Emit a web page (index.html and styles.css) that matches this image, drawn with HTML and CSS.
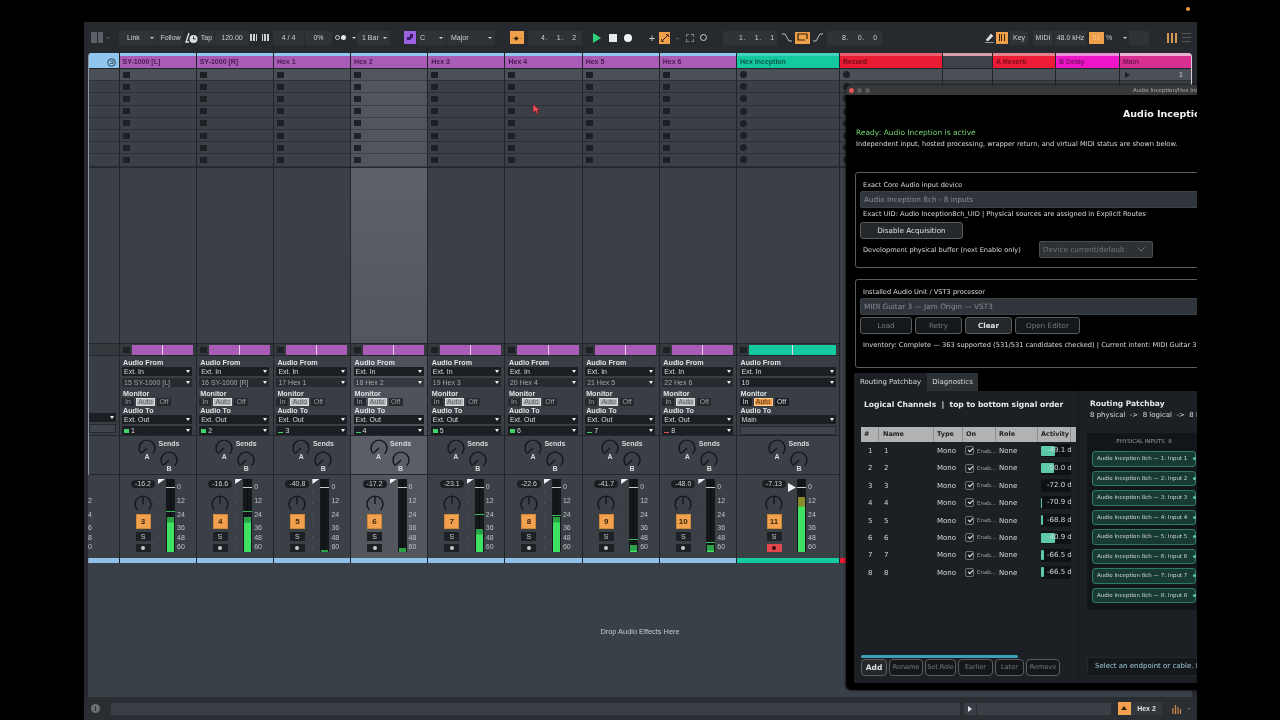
FILE: index.html
```html
<!DOCTYPE html>
<html lang="en">
<head>
  <meta charset="UTF-8">
  <title>Live Session - Audio Inception</title>
  <link rel="stylesheet" href="styles.css">
</head>
<body>
  <svg class="defs" width="0" height="0">
    <symbol id="send" viewBox="0 0 18 18"><path d="M3.3 14.7A8 8 0 1 1 14.7 14.7M9 9L3.9 14.1" fill="none" stroke="#14171a" stroke-width="1.4"/></symbol>
    <symbol id="pan" viewBox="0 0 18 18"><path d="M3.3 14.7A8 8 0 1 1 14.7 14.7M9 9V1" fill="none" stroke="#14171a" stroke-width="1.4"/></symbol>
  </svg>
  <div class="menubar"><i class="rec-dot"></i></div>

  <div class="app">
    <div class="transport">
      <div class="t-grip"><i></i><i></i></div>
      <i class="caret t-caret1"></i>
      <div class="box t-link">Link<i class="caret"></i></div>
      <div class="box t-follow">Follow</div>
      <svg class="t-clock" width="13" height="12" viewBox="0 0 13 12"><path d="M4 1L1 10H4" fill="none" stroke="#ddd" stroke-width="1.4"/><circle cx="8.5" cy="7" r="4" fill="#ddd"/><path d="M8.5 4.5V7H10.5" fill="none" stroke="#24272b"/></svg>
      <div class="box t-tap">Tap</div>
      <div class="box t-tempo">120.00</div>
      <div class="t-bars"><i></i><i></i><i class="thin"></i></div>
      <div class="t-bars t-bars2"><i class="thin"></i><i></i><i></i></div>
      <div class="box t-sig">4 / 4</div>
      <div class="box t-pct">0%</div>
      <div class="t-dots"><i class="open"></i><i></i></div>
      <i class="caret t-caret2"></i>
      <div class="box t-bar">1 Bar<i class="caret"></i></div>
      <div class="t-scale"><i></i></div>
      <div class="box t-key">C<i class="caret"></i></div>
      <div class="box t-major">Major<i class="caret"></i></div>
      <div class="obtn t-auto"><span>-&#9670;-</span></div>
      <div class="box t-pos">4. &nbsp;&nbsp;1. &nbsp;&nbsp;2</div>
      <i class="t-play"></i>
      <i class="t-stop"></i>
      <i class="t-rec"></i>
      <span class="t-plus">+</span>
      <div class="obtn t-link2">
        <svg width="8" height="8" viewBox="0 0 8 8"><path d="M1 7L7 1M1 5A1.5 1.5 0 1 0 3 7M5 1A1.5 1.5 0 1 1 7 3" fill="none" stroke="#3a2408"/></svg>
      </div>
      <span class="t-back">&#8592;</span>
      <i class="t-frame"></i>
      <i class="t-ring"></i>
      <div class="box t-start">1. &nbsp;&nbsp;1. &nbsp;&nbsp;1</div>
      <svg class="t-curve1" width="10" height="9" viewBox="0 0 10 9"><path d="M0 1H3L7 8H10" fill="none" stroke="#bbb"/></svg>
      <div class="obtn t-loop"><svg width="11" height="9" viewBox="0 0 11 9"><path d="M8 7H1V1H10V6" fill="none" stroke="#3a2408" stroke-width="1.2"/></svg></div>
      <svg class="t-curve2" width="10" height="9" viewBox="0 0 10 9"><path d="M0 8H3L7 1H10" fill="none" stroke="#bbb"/></svg>
      <div class="box t-len">8. &nbsp;&nbsp;0. &nbsp;&nbsp;0</div>
      <svg class="t-pencil" width="9" height="10" viewBox="0 0 9 10"><path d="M1 7L6 1L8 3L3 8ZM0 9.5H9" fill="#ddd" stroke="#ddd" stroke-width=".6"/></svg>
      <div class="obtn t-piano"><span></span></div>
      <div class="box t-keyb">Key</div>
      <div class="box t-midi">MIDI</div>
      <div class="box t-rate">48.0 kHz</div>
      <div class="t-cpu"><b>51</b></div>
      <span class="t-percent">%</span>
      <i class="caret t-caret3"></i>
      <div class="box t-blank"></div>
      <div class="t-views"><i></i><i></i><i></i></div>
      <div class="t-lines"><i></i><i></i><i></i></div>
    </div>

    <div class="session">
      <div class="col head">
        <div class="title"><svg width="9" height="9" viewBox="0 0 9 9"><circle cx="4.5" cy="4.5" r="3.8" fill="none" stroke="#27424f"/><path d="M3 3H6V5.5H3" fill="none" stroke="#27424f" stroke-width=".8"/></svg></div>
        <div class="slot"></div><div class="slot"></div><div class="slot"></div><div class="slot"></div>
        <div class="slot"></div><div class="slot"></div><div class="slot"></div><div class="slot"></div>
        <div class="empty"></div>
        <div class="ovw"></div>
        <div class="dev">
          <div class="dd head-dd">&nbsp;</div>
          <div class="dd-box"></div>
        </div>
        <div class="sends"></div>
        <div class="mix">
          <div class="scale"><span>0</span><span>12</span><span>24</span><span>36</span><span>48</span><span>60</span></div>
        </div>
        <div class="foot"></div>
      </div>

      <div class="col">
        <div class="title">SY-1000 [L]</div>
        <div class="slot"><i class="stop"></i></div><div class="slot"><i class="stop"></i></div><div class="slot"><i class="stop"></i></div><div class="slot"><i class="stop"></i></div>
        <div class="slot"><i class="stop"></i></div><div class="slot"><i class="stop"></i></div><div class="slot"><i class="stop"></i></div><div class="slot"><i class="stop"></i></div>
        <div class="empty"></div>
        <div class="ovw"><i class="stop"></i><div class="clip"><i></i></div></div>
        <div class="dev">
          <label>Audio From</label>
          <div class="dd">Ext. In</div>
          <div class="dd sub">15 SY-1000 [L]</div>
          <label>Monitor</label>
          <div class="mon"><span>In</span><span class="on">Auto</span><span>Off</span></div>
          <label>Audio To</label>
          <div class="dd">Ext. Out</div>
          <div class="dd"><i class="sig high"></i>1</div>
        </div>
        <div class="sends">
          <div class="knob"><svg width="18" height="18"><use href="#send"/></svg><b>A</b></div>
          <div class="knob"><span>Sends</span><svg width="18" height="18"><use href="#send"/></svg><b>B</b></div>
        </div>
        <div class="mix">
          <div class="mix-l">
            <div class="pill">-16.2</div>
            <svg class="pan" width="18" height="18"><use href="#pan"/></svg>
            <div class="num">3</div>
            <div class="solo">S</div>
            <div class="arm"><i></i></div>
          </div>
          <i class="flag"></i>
          <i class="ticks"></i>
          <div class="meter"><i class="peak" style="top:32px"></i><i class="fill" style="height:35px"></i></div>
          <div class="scale"><span>0</span><span>12</span><span>24</span><span>36</span><span>48</span><span>60</span></div>
        </div>
        <div class="foot"></div>
      </div>

      <div class="col">
        <div class="title">SY-1000 [R]</div>
        <div class="slot"><i class="stop"></i></div><div class="slot"><i class="stop"></i></div><div class="slot"><i class="stop"></i></div><div class="slot"><i class="stop"></i></div>
        <div class="slot"><i class="stop"></i></div><div class="slot"><i class="stop"></i></div><div class="slot"><i class="stop"></i></div><div class="slot"><i class="stop"></i></div>
        <div class="empty"></div>
        <div class="ovw"><i class="stop"></i><div class="clip"><i></i></div></div>
        <div class="dev">
          <label>Audio From</label>
          <div class="dd">Ext. In</div>
          <div class="dd sub">16 SY-1000 [R]</div>
          <label>Monitor</label>
          <div class="mon"><span>In</span><span class="on">Auto</span><span>Off</span></div>
          <label>Audio To</label>
          <div class="dd">Ext. Out</div>
          <div class="dd"><i class="sig high"></i>2</div>
        </div>
        <div class="sends">
          <div class="knob"><svg width="18" height="18"><use href="#send"/></svg><b>A</b></div>
          <div class="knob"><span>Sends</span><svg width="18" height="18"><use href="#send"/></svg><b>B</b></div>
        </div>
        <div class="mix">
          <div class="mix-l">
            <div class="pill">-16.6</div>
            <svg class="pan" width="18" height="18"><use href="#pan"/></svg>
            <div class="num">4</div>
            <div class="solo">S</div>
            <div class="arm"><i></i></div>
          </div>
          <i class="flag"></i>
          <i class="ticks"></i>
          <div class="meter"><i class="peak" style="top:32px"></i><i class="fill" style="height:35px"></i></div>
          <div class="scale"><span>0</span><span>12</span><span>24</span><span>36</span><span>48</span><span>60</span></div>
        </div>
        <div class="foot"></div>
      </div>

      <div class="col">
        <div class="title">Hex 1</div>
        <div class="slot"><i class="stop"></i></div><div class="slot"><i class="stop"></i></div><div class="slot"><i class="stop"></i></div><div class="slot"><i class="stop"></i></div>
        <div class="slot"><i class="stop"></i></div><div class="slot"><i class="stop"></i></div><div class="slot"><i class="stop"></i></div><div class="slot"><i class="stop"></i></div>
        <div class="empty"></div>
        <div class="ovw"><i class="stop"></i><div class="clip"><i></i></div></div>
        <div class="dev">
          <label>Audio From</label>
          <div class="dd">Ext. In</div>
          <div class="dd sub">17 Hex 1</div>
          <label>Monitor</label>
          <div class="mon"><span>In</span><span class="on">Auto</span><span>Off</span></div>
          <label>Audio To</label>
          <div class="dd">Ext. Out</div>
          <div class="dd"><i class="sig"></i>3</div>
        </div>
        <div class="sends">
          <div class="knob"><svg width="18" height="18"><use href="#send"/></svg><b>A</b></div>
          <div class="knob"><span>Sends</span><svg width="18" height="18"><use href="#send"/></svg><b>B</b></div>
        </div>
        <div class="mix">
          <div class="mix-l">
            <div class="pill">-40.8</div>
            <svg class="pan" width="18" height="18"><use href="#pan"/></svg>
            <div class="num">5</div>
            <div class="solo">S</div>
            <div class="arm"><i></i></div>
          </div>
          <i class="flag"></i>
          <i class="ticks"></i>
          <div class="meter"><i class="fill" style="height:2px"></i></div>
          <div class="scale"><span>0</span><span>12</span><span>24</span><span>36</span><span>48</span><span>60</span></div>
        </div>
        <div class="foot"></div>
      </div>

      <div class="col selected">
        <div class="title">Hex 2</div>
        <div class="slot"><i class="stop"></i></div><div class="slot"><i class="stop"></i></div><div class="slot"><i class="stop"></i></div><div class="slot"><i class="stop"></i></div>
        <div class="slot"><i class="stop"></i></div><div class="slot"><i class="stop"></i></div><div class="slot"><i class="stop"></i></div><div class="slot"><i class="stop"></i></div>
        <div class="empty"></div>
        <div class="ovw"><i class="stop"></i><div class="clip"><i></i></div></div>
        <div class="dev">
          <label>Audio From</label>
          <div class="dd">Ext. In</div>
          <div class="dd sub">18 Hex 2</div>
          <label>Monitor</label>
          <div class="mon"><span>In</span><span class="on">Auto</span><span>Off</span></div>
          <label>Audio To</label>
          <div class="dd">Ext. Out</div>
          <div class="dd"><i class="sig"></i>4</div>
        </div>
        <div class="sends">
          <div class="knob"><svg width="18" height="18"><use href="#send"/></svg><b>A</b></div>
          <div class="knob"><span>Sends</span><svg width="18" height="18"><use href="#send"/></svg><b>B</b></div>
        </div>
        <div class="mix">
          <div class="mix-l">
            <div class="pill">-17.2</div>
            <svg class="pan" width="18" height="18"><use href="#pan"/></svg>
            <div class="num">6</div>
            <div class="solo">S</div>
            <div class="arm"><i></i></div>
          </div>
          <i class="flag"></i>
          <i class="ticks"></i>
          <div class="meter"><i class="fill" style="height:4px"></i></div>
          <div class="scale"><span>0</span><span>12</span><span>24</span><span>36</span><span>48</span><span>60</span></div>
        </div>
        <div class="foot"></div>
      </div>

      <div class="col">
        <div class="title">Hex 3</div>
        <div class="slot"><i class="stop"></i></div><div class="slot"><i class="stop"></i></div><div class="slot"><i class="stop"></i></div><div class="slot"><i class="stop"></i></div>
        <div class="slot"><i class="stop"></i></div><div class="slot"><i class="stop"></i></div><div class="slot"><i class="stop"></i></div><div class="slot"><i class="stop"></i></div>
        <div class="empty"></div>
        <div class="ovw"><i class="stop"></i><div class="clip"><i></i></div></div>
        <div class="dev">
          <label>Audio From</label>
          <div class="dd">Ext. In</div>
          <div class="dd sub">19 Hex 3</div>
          <label>Monitor</label>
          <div class="mon"><span>In</span><span class="on">Auto</span><span>Off</span></div>
          <label>Audio To</label>
          <div class="dd">Ext. Out</div>
          <div class="dd"><i class="sig high"></i>5</div>
        </div>
        <div class="sends">
          <div class="knob"><svg width="18" height="18"><use href="#send"/></svg><b>A</b></div>
          <div class="knob"><span>Sends</span><svg width="18" height="18"><use href="#send"/></svg><b>B</b></div>
        </div>
        <div class="mix">
          <div class="mix-l">
            <div class="pill">-23.1</div>
            <svg class="pan" width="18" height="18"><use href="#pan"/></svg>
            <div class="num">7</div>
            <div class="solo">S</div>
            <div class="arm"><i></i></div>
          </div>
          <i class="flag"></i>
          <i class="ticks"></i>
          <div class="meter"><i class="peak" style="top:35px"></i><i class="fill" style="height:23px"></i></div>
          <div class="scale"><span>0</span><span>12</span><span>24</span><span>36</span><span>48</span><span>60</span></div>
        </div>
        <div class="foot"></div>
      </div>

      <div class="col">
        <div class="title">Hex 4</div>
        <div class="slot"><i class="stop"></i></div><div class="slot"><i class="stop"></i></div><div class="slot"><i class="stop"></i></div><div class="slot"><i class="stop"></i></div>
        <div class="slot"><i class="stop"></i></div><div class="slot"><i class="stop"></i></div><div class="slot"><i class="stop"></i></div><div class="slot"><i class="stop"></i></div>
        <div class="empty"></div>
        <div class="ovw"><i class="stop"></i><div class="clip"><i></i></div></div>
        <div class="dev">
          <label>Audio From</label>
          <div class="dd">Ext. In</div>
          <div class="dd sub">20 Hex 4</div>
          <label>Monitor</label>
          <div class="mon"><span>In</span><span class="on">Auto</span><span>Off</span></div>
          <label>Audio To</label>
          <div class="dd">Ext. Out</div>
          <div class="dd"><i class="sig high"></i>6</div>
        </div>
        <div class="sends">
          <div class="knob"><svg width="18" height="18"><use href="#send"/></svg><b>A</b></div>
          <div class="knob"><span>Sends</span><svg width="18" height="18"><use href="#send"/></svg><b>B</b></div>
        </div>
        <div class="mix">
          <div class="mix-l">
            <div class="pill">-22.6</div>
            <svg class="pan" width="18" height="18"><use href="#pan"/></svg>
            <div class="num">8</div>
            <div class="solo">S</div>
            <div class="arm"><i></i></div>
          </div>
          <i class="flag"></i>
          <i class="ticks"></i>
          <div class="meter"><i class="peak" style="top:36px"></i><i class="fill" style="height:35px"></i></div>
          <div class="scale"><span>0</span><span>12</span><span>24</span><span>36</span><span>48</span><span>60</span></div>
        </div>
        <div class="foot"></div>
      </div>

      <div class="col">
        <div class="title">Hex 5</div>
        <div class="slot"><i class="stop"></i></div><div class="slot"><i class="stop"></i></div><div class="slot"><i class="stop"></i></div><div class="slot"><i class="stop"></i></div>
        <div class="slot"><i class="stop"></i></div><div class="slot"><i class="stop"></i></div><div class="slot"><i class="stop"></i></div><div class="slot"><i class="stop"></i></div>
        <div class="empty"></div>
        <div class="ovw"><i class="stop"></i><div class="clip"><i></i></div></div>
        <div class="dev">
          <label>Audio From</label>
          <div class="dd">Ext. In</div>
          <div class="dd sub">21 Hex 5</div>
          <label>Monitor</label>
          <div class="mon"><span>In</span><span class="on">Auto</span><span>Off</span></div>
          <label>Audio To</label>
          <div class="dd">Ext. Out</div>
          <div class="dd"><i class="sig"></i>7</div>
        </div>
        <div class="sends">
          <div class="knob"><svg width="18" height="18"><use href="#send"/></svg><b>A</b></div>
          <div class="knob"><span>Sends</span><svg width="18" height="18"><use href="#send"/></svg><b>B</b></div>
        </div>
        <div class="mix">
          <div class="mix-l">
            <div class="pill">-41.7</div>
            <svg class="pan" width="18" height="18"><use href="#pan"/></svg>
            <div class="num">9</div>
            <div class="solo">S</div>
            <div class="arm"><i></i></div>
          </div>
          <i class="flag"></i>
          <i class="ticks"></i>
          <div class="meter"><i class="peak" style="top:60px"></i><i class="fill" style="height:7px"></i></div>
          <div class="scale"><span>0</span><span>12</span><span>24</span><span>36</span><span>48</span><span>60</span></div>
        </div>
        <div class="foot"></div>
      </div>

      <div class="col">
        <div class="title">Hex 6</div>
        <div class="slot"><i class="stop"></i></div><div class="slot"><i class="stop"></i></div><div class="slot"><i class="stop"></i></div><div class="slot"><i class="stop"></i></div>
        <div class="slot"><i class="stop"></i></div><div class="slot"><i class="stop"></i></div><div class="slot"><i class="stop"></i></div><div class="slot"><i class="stop"></i></div>
        <div class="empty"></div>
        <div class="ovw"><i class="stop"></i><div class="clip"><i></i></div></div>
        <div class="dev">
          <label>Audio From</label>
          <div class="dd">Ext. In</div>
          <div class="dd sub">22 Hex 6</div>
          <label>Monitor</label>
          <div class="mon"><span>In</span><span class="on">Auto</span><span>Off</span></div>
          <label>Audio To</label>
          <div class="dd">Ext. Out</div>
          <div class="dd"><i class="sig red"></i>8</div>
        </div>
        <div class="sends">
          <div class="knob"><svg width="18" height="18"><use href="#send"/></svg><b>A</b></div>
          <div class="knob"><span>Sends</span><svg width="18" height="18"><use href="#send"/></svg><b>B</b></div>
        </div>
        <div class="mix">
          <div class="mix-l">
            <div class="pill">-48.0</div>
            <svg class="pan" width="18" height="18"><use href="#pan"/></svg>
            <div class="num">10</div>
            <div class="solo">S</div>
            <div class="arm"><i></i></div>
          </div>
          <i class="flag"></i>
          <i class="ticks"></i>
          <div class="meter"><i class="peak" style="top:63px"></i><i class="fill" style="height:7px"></i></div>
          <div class="scale"><span>0</span><span>12</span><span>24</span><span>36</span><span>48</span><span>60</span></div>
        </div>
        <div class="foot"></div>
      </div>

      <div class="col wide teal">
        <div class="title">Hex Inception</div>
        <div class="slot"><i class="rec"></i></div><div class="slot"><i class="rec"></i></div><div class="slot"><i class="rec"></i></div><div class="slot"><i class="rec"></i></div>
        <div class="slot"><i class="rec"></i></div><div class="slot"><i class="rec"></i></div><div class="slot"><i class="rec"></i></div><div class="slot"><i class="rec"></i></div>
        <div class="empty"></div>
        <div class="ovw"><i class="stop"></i><div class="clip"><i></i></div></div>
        <div class="dev">
          <label>Audio From</label>
          <div class="dd">Ext. In</div>
          <div class="dd">10</div>
          <label>Monitor</label>
          <div class="mon"><span>In</span><span class="armed">Auto</span><span>Off</span></div>
          <label>Audio To</label>
          <div class="dd">Main</div>
          <div class="dd-box"></div>
        </div>
        <div class="sends">
          <div class="knob"><svg width="18" height="18"><use href="#send"/></svg><b>A</b></div>
          <div class="knob"><span>Sends</span><svg width="18" height="18"><use href="#send"/></svg><b>B</b></div>
        </div>
        <div class="mix">
          <div class="mix-l">
            <div class="pill">-7.13</div>
            <svg class="pan" width="18" height="18"><use href="#pan"/></svg>
            <div class="num">11</div>
            <div class="solo">S</div>
            <div class="arm hot"><i></i></div>
          </div>
          <i class="flag big"></i>
          <div class="meter"><i class="fill loud" style="height:55px"></i></div>
          <div class="scale"><span>0</span><span>12</span><span>24</span><span>36</span><span>48</span><span>60</span></div>
        </div>
        <div class="foot"></div>
      </div>

      <div class="col record">
        <div class="title">Record</div>
        <div class="slot"><i class="rec"></i></div><div class="slot"><i class="rec"></i></div><div class="slot"><i class="rec"></i></div><div class="slot"><i class="rec"></i></div>
        <div class="slot"><i class="rec"></i></div><div class="slot"><i class="rec"></i></div><div class="slot"><i class="rec"></i></div><div class="slot"><i class="rec"></i></div>
        <div class="empty"></div>
        <div class="foot"></div>
      </div>
      <div class="col gap-col">
        <div class="title"></div>
        <div class="slot"></div><div class="slot"></div>
        <div class="empty"></div>
      </div>
      <div class="col reverb">
        <div class="title">A Reverb</div>
        <div class="slot"></div><div class="slot"></div>
        <div class="empty"></div>
      </div>
      <div class="col delay">
        <div class="title">B Delay</div>
        <div class="slot"></div><div class="slot"></div>
        <div class="empty"></div>
      </div>
      <div class="col main">
        <div class="title">Main</div>
        <div class="slot"><i class="tri"></i><span>1</span></div><div class="slot"></div>
        <div class="empty"></div>
      </div>
    </div>

    <div class="drop">
      <span>Drop Audio Effects Here</span>
    </div>

    <div class="status">
      <span class="info">i</span>
      <div class="status-field"></div>
      <div class="status-play"><i></i></div>
      <div class="status-field2"></div>
      <div class="status-arm"><i></i></div>
      <div class="status-name">Hex 2</div>
      <svg class="status-icon" width="12" height="10" viewBox="0 0 12 10"><path d="M1 4V10M3.5 1V10M6 3V10M8.5 5V10" stroke="#c98a4a" stroke-width="1.2"/></svg>
      <i class="caret status-caret"></i>
    </div>

    <div class="plugin">
      <div class="plugin-bar">
        <i class="light close"></i><i class="light"></i><i class="light"></i>
        <span>Audio Inception/Hex Inception</span>
      </div>
      <div class="plugin-body">
        <h1>Audio Inception</h1>
        <p class="ready">Ready: Audio Inception is active</p>
        <p class="note">Independent input, hosted processing, wrapper return, and virtual MIDI status are shown below.</p>

        <div class="group group-input">
          <div class="group-label">Exact Core Audio input device</div>
          <div class="field">Audio Inception 8ch - 8 inputs</div>
          <div class="hint">Exact UID: Audio Inception8ch_UID | Physical sources are assigned in Explicit Routes</div>
          <div class="btn btn-acq">Disable Acquisition</div>
          <div class="buffer-row">
            <span>Development physical buffer (next Enable only)</span>
            <div class="select">Device current/default<svg width="8" height="5" viewBox="0 0 8 5"><path d="M0.5 0.5L4 4L7.5 0.5" fill="none" stroke="#6c7276"/></svg></div>
          </div>
        </div>

        <div class="group group-proc">
          <div class="group-label">Installed Audio Unit / VST3 processor</div>
          <div class="field">MIDI Guitar 3 — Jam Origin — VST3</div>
          <div class="btn-row">
            <div class="btn dim btn-load">Load</div>
            <div class="btn dim btn-retry">Retry</div>
            <div class="btn btn-clear">Clear</div>
            <div class="btn dim btn-editor">Open Editor</div>
          </div>
          <div class="hint inventory">Inventory: Complete — 363 supported (531/531 candidates checked) | Current intent: MIDI Guitar 3</div>
        </div>

        <div class="tabs">
          <div class="tab active">Routing Patchbay</div>
          <div class="tab">Diagnostics</div>
        </div>

        <div class="tab-panel">
          <div class="channels">
            <h2>Logical Channels &nbsp;|&nbsp; top to bottom signal order</h2>
            <div class="lc-head"><span>#</span><span>Name</span><span>Type</span><span>On</span><span>Role</span><span>Activity</span></div>
            <div class="lc-row">
              <span>1</span><span>1</span><span>Mono</span><span class="on-cell"><i class="check"></i>Enab...</span><span>None</span>
              <span class="act"><i style="width:14px"></i><em>-49.1 dB</em></span>
            </div>
            <div class="lc-row">
              <span>2</span><span>2</span><span>Mono</span><span class="on-cell"><i class="check"></i>Enab...</span><span>None</span>
              <span class="act"><i style="width:13px"></i><em>-50.0 dB</em></span>
            </div>
            <div class="lc-row">
              <span>3</span><span>3</span><span>Mono</span><span class="on-cell"><i class="check"></i>Enab...</span><span>None</span>
              <span class="act"><em>-72.0 dB</em></span>
            </div>
            <div class="lc-row">
              <span>4</span><span>4</span><span>Mono</span><span class="on-cell"><i class="check"></i>Enab...</span><span>None</span>
              <span class="act"><i style="width:1px"></i><em>-70.9 dB</em></span>
            </div>
            <div class="lc-row">
              <span>5</span><span>5</span><span>Mono</span><span class="on-cell"><i class="check"></i>Enab...</span><span>None</span>
              <span class="act"><i style="width:2px"></i><em>-68.8 dB</em></span>
            </div>
            <div class="lc-row">
              <span>6</span><span>6</span><span>Mono</span><span class="on-cell"><i class="check"></i>Enab...</span><span>None</span>
              <span class="act"><i style="width:14px"></i><em>-40.9 dB</em></span>
            </div>
            <div class="lc-row">
              <span>7</span><span>7</span><span>Mono</span><span class="on-cell"><i class="check"></i>Enab...</span><span>None</span>
              <span class="act"><i style="width:3px"></i><em>-66.5 dB</em></span>
            </div>
            <div class="lc-row">
              <span>8</span><span>8</span><span>Mono</span><span class="on-cell"><i class="check"></i>Enab...</span><span>None</span>
              <span class="act"><i style="width:3px"></i><em>-66.5 dB</em></span>
            </div>
            <div class="lc-space"></div>
            <div class="scrollbar"></div>
            <div class="lc-actions">
              <div class="btn small add">Add</div>
              <div class="btn small dim b-rename">Rename</div>
              <div class="btn small dim b-role">Set Role</div>
              <div class="btn small dim b-earlier">Earlier</div>
              <div class="btn small dim b-later">Later</div>
              <div class="btn small dim b-remove">Remove</div>
            </div>
          </div>

          <div class="patchbay">
            <h2>Routing Patchbay</h2>
            <p>8 physical &nbsp;-&gt;&nbsp; 8 logical &nbsp;-&gt;&nbsp; 8 hosted</p>
            <div class="canvas">
              <div class="canvas-title">PHYSICAL INPUTS &nbsp;8</div>
              <div class="node">Audio Inception 8ch — 1: Input 1<i></i></div>
              <div class="node">Audio Inception 8ch — 2: Input 2<i></i></div>
              <div class="node">Audio Inception 8ch — 3: Input 3<i></i></div>
              <div class="node">Audio Inception 8ch — 4: Input 4<i></i></div>
              <div class="node">Audio Inception 8ch — 5: Input 5<i></i></div>
              <div class="node">Audio Inception 8ch — 6: Input 6<i></i></div>
              <div class="node">Audio Inception 8ch — 7: Input 7<i></i></div>
              <div class="node">Audio Inception 8ch — 8: Input 8<i></i></div>
            </div>
            <div class="selectbar">Select an endpoint or cable. Drag to connect.</div>
          </div>
        </div>
      </div>
    </div>

    <svg class="cursor" width="9" height="12" viewBox="0 0 9 12"><path d="M1 1V10L3.2 8L5 11.2L6.5 10.4L5 7.4H8Z" fill="#e9505a" stroke="#5a1a20" stroke-width=".7"/></svg>
  </div>
</body>
</html>
```

FILE: styles.css
```css
* {
  box-sizing: border-box;
}
html, body {
  margin: 0;
  width: 1280px;
  height: 720px;
  overflow: hidden;
  background: #000;
  font-family: "Liberation Sans", Arial, sans-serif;
}
i {
  display: block;
  font-style: normal;
}
.defs {
  position: absolute;
}
.menubar {
  height: 22px;
  display: flex;
  justify-content: flex-end;
  padding: 7px 90px 0 0;
}
.rec-dot {
  width: 4px;
  height: 4px;
  border-radius: 50%;
  background: #f09a3a;
}
.app {
  position: relative;
  margin-left: 84px;
  width: 1113px;
  height: 698px;
  background: #26292d;
  display: flex;
  flex-direction: column;
  overflow: hidden;
  filter: blur(0.3px);
}

/* transport */
.transport {
  height: 31px;
  display: flex;
  align-items: center;
  color: #cdd0d2;
  font-size: 7px;
}
.box {
  position: relative;
  height: 14px;
  line-height: 14px;
  background: #2f3338;
  text-align: center;
  flex: none;
}
.caret {
  width: 0;
  height: 0;
  border: 2px solid transparent;
  border-top: 2.5px solid #cdd0d2;
  border-bottom: 0;
  flex: none;
}
.box .caret {
  position: absolute;
  right: 3px;
  top: 6px;
}
.obtn {
  background: #f0a04b;
  color: #3a2408;
  display: flex;
  align-items: center;
  justify-content: center;
  flex: none;
}
.t-grip { display: flex; gap: 1px; margin-left: 7px; width: 12px; height: 11px; }
.t-grip i { flex: 1; background: #5b6066; }
.t-caret1 { margin-left: 3px; border-top-color: #565b60; }
.t-link { margin-left: 9px; width: 38px; text-align: left; padding-left: 8px; }
.t-follow { margin-left: 1px; width: 25px; }
.t-clock { margin-left: 2px; flex: none; }
.t-tap { width: 15px; margin-left: 1px; }
.t-tempo { width: 34px; margin-left: 1px; }
.t-bars { display: flex; gap: 1px; width: 9px; height: 7px; margin-left: 1px; flex: none; }
.t-bars i { width: 2px; background: #cdd0d2; }
.t-bars i.thin { width: 1px; }
.t-bars2 { margin-left: 3px; }
.t-sig { width: 31px; margin-left: 2px; }
.t-pct { width: 27px; margin-left: 1px; }
.t-dots { display: flex; gap: 1px; margin-left: 3px; width: 12px; flex: none; }
.t-dots i { width: 5px; height: 5px; border-radius: 50%; background: #e4e6e7; }
.t-dots i.open { background: none; border: 1px solid #cdd0d2; }
.t-caret2 { margin-left: 5px; }
.t-bar { width: 33px; margin-left: 1px; text-align: left; padding-left: 5px; }
.t-scale { width: 12px; height: 13px; margin-left: 14px; background: #9a62e0; padding: 3px; flex: none; }
.t-scale i { width: 6px; height: 6px; background: #3a1d66; clip-path: polygon(0 100%, 0 50%, 50% 50%, 50% 0, 100% 0, 100% 50%, 50% 100%); }
.t-key { width: 29px; margin-left: 1px; text-align: left; padding-left: 3px; }
.t-major { width: 48px; margin-left: 1px; text-align: left; padding-left: 4px; }
.t-auto { width: 14px; height: 13px; margin-left: 15px; font-size: 6px; }
.t-pos { width: 54px; margin-left: 4px; text-align: right; padding-right: 5px; letter-spacing: 0.8px; }
.t-play { width: 0; height: 0; border-left: 8px solid #2fd27a; border-top: 5px solid transparent; border-bottom: 5px solid transparent; margin-left: 11px; flex: none; }
.t-stop { width: 8px; height: 8px; background: #e6e8e9; margin-left: 8px; flex: none; }
.t-rec { width: 8px; height: 8px; border-radius: 50%; background: #f1f2f3; margin-left: 7px; flex: none; }
.t-plus { margin-left: 16px; width: 8px; font-size: 11px; text-align: center; flex: none; }
.t-link2 { width: 11px; height: 12px; margin-left: 3px; }
.t-back { margin-left: 5px; width: 6px; font-size: 7px; color: #8b9094; flex: none; }
.t-frame { width: 8px; height: 8px; margin-left: 5px; border: 1px dashed #7f8488; flex: none; }
.t-ring { width: 7px; height: 7px; margin-left: 6px; border-radius: 50%; border: 1px solid #cdd0d2; flex: none; }
.t-start { width: 54px; margin-left: 16px; text-align: right; padding-right: 2px; letter-spacing: 0.8px; }
.t-curve1 { margin-left: 5px; flex: none; }
.t-loop { width: 15px; height: 12px; margin-left: 3px; }
.t-curve2 { margin-left: 3px; flex: none; }
.t-len { width: 55px; margin-left: 4px; text-align: right; padding-right: 4px; letter-spacing: 0.8px; }
.t-pencil { margin-left: 103px; flex: none; }
.t-piano { width: 12px; height: 12px; margin-left: 2px; }
.t-piano span { width: 6px; height: 7px; background: repeating-linear-gradient(90deg, #3a2408 0 1px, transparent 1px 2.5px); }
.t-keyb { width: 18px; margin-left: 2px; }
.t-midi { width: 20px; margin-left: 5px; }
.t-rate { width: 31px; margin-left: 2px; }
.t-cpu { width: 15px; height: 12px; margin-left: 3px; background: #f0a04b; text-align: center; line-height: 12px; flex: none; }
.t-cpu b { color: #f7c183; font-weight: normal; }
.t-percent { width: 8px; margin-left: 1px; text-align: center; flex: none; }
.t-caret3 { margin-left: 10px; }
.t-blank { width: 20px; margin-left: 2px; }
.t-views { display: flex; gap: 2px; margin-left: 18px; width: 10px; height: 10px; flex: none; }
.t-views i { width: 2px; background: #d79a55; }
.t-lines { display: flex; flex-direction: column; justify-content: space-between; margin-left: 5px; width: 9px; height: 9px; flex: none; }
.t-lines i { height: 1px; background: #53585d; }

/* session view */
.session {
  margin-left: 4px;
  width: 1104px;
  height: 510px;
  display: flex;
  flex: none;
  overflow: hidden;
  border-radius: 4px 4px 0 0;
  background: #3a4046;
}
.col {
  --c: #a95cb5;
  --top: #90c5ee;
  --foot: #8fc0e8;
  --txt: #4a1a52;
  width: 77.2px;
  display: flex;
  flex-direction: column;
  flex: none;
  border-right: 1px solid #20252a;
}
.col.head { width: 31.5px; --c: #90c5ee; border-left: 1px solid #8a98a2; }
.col.wide { width: 103px; }
.col.teal { --c: #12c9a0; --top: #45d2c0; --foot: #12c9a0; --txt: #0b5a48; }
.col.record { width: 103px; --c: #e91c33; --top: #e8606e; --foot: #e91c33; --txt: #6d0d18; }
.col.gap-col { width: 50px; --c: #3d4349; --top: #d8a0a8; }
.col.reverb { width: 63px; --c: #ee1c36; --top: #e8808c; --txt: #7d1020; }
.col.delay { width: 64px; --c: #ee14c8; --top: #ea90d8; --txt: #7d1068; }
.col.main { width: 72px; --c: #d92f92; --top: #eab0d0; --txt: #701450; border-right: 1px solid #d8d0d4; }
.title {
  height: 16px;
  flex: none;
  background: var(--c);
  border-top: 3px solid var(--top);
  border-bottom: 1px solid #20252a;
  color: var(--txt);
  font-size: 7px;
  font-weight: bold;
  line-height: 12px;
  padding-left: 3px;
}
.head .title {
  display: flex;
  align-items: center;
  justify-content: flex-end;
  padding-right: 3px;
}
.slot {
  height: 12.2px;
  flex: none;
  background: #3a4046;
  border-bottom: 1px solid #2b3035;
  display: flex;
  align-items: center;
  padding-left: 3px;
}
.slot:nth-child(2) {
  background: #4b5056;
}
.stop {
  width: 7px;
  height: 6px;
  background: #1d2125;
  flex: none;
}
.rec {
  width: 7px;
  height: 7px;
  border-radius: 50%;
  background: #1d2125;
  flex: none;
}
.tri {
  width: 0;
  height: 0;
  border-left: 5px solid #1d2125;
  border-top: 3px solid transparent;
  border-bottom: 3px solid transparent;
  margin-left: 2px;
}
.main .slot span {
  margin-left: auto;
  padding-right: 8px;
  font-size: 7px;
  color: #d0d2d4;
}
.empty {
  flex: 1;
  border-top: 1px solid #23272b;
}
.ovw {
  height: 13px;
  flex: none;
  display: flex;
  align-items: center;
  gap: 2px;
  padding: 0 3px;
  border-top: 1px solid #23272b;
  border-bottom: 1px solid #23272b;
  background: #34393e;
}
.clip {
  flex: 1;
  height: 10px;
  background: var(--c);
  display: flex;
  justify-content: center;
}
.clip i {
  width: 1px;
  background: #e8d2ec;
}
.dev {
  height: 80px;
  flex: none;
  padding: 2px 3.5px 0 2.5px;
  background: #383e44;
  border-bottom: 1px solid #23272b;
}
.dev label {
  display: block;
  height: 9px;
  padding-left: 1px;
  font-size: 7.2px;
  line-height: 9px;
  font-weight: bold;
  color: #dfe1e3;
}
.dd {
  position: relative;
  height: 9px;
  margin-bottom: 2px;
  padding-left: 2px;
  background: #1b1f23;
  color: #d7d9db;
  font-size: 7px;
  line-height: 9px;
  display: flex;
  align-items: center;
}
.dd::after {
  content: "";
  position: absolute;
  right: 2px;
  top: 3px;
  border: 2.5px solid transparent;
  border-top: 3px solid #f1f1f1;
  border-bottom: 0;
}
.dd.sub {
  background: #282c30;
  color: #a2a5a8;
}
.head .dev {
  padding: 0;
}
.head-dd {
  margin-top: 57px;
  width: 27px;
}
.dd-box {
  height: 9px;
  border: 1px solid #252a2e;
  background: #3f454a;
}
.head .dd-box {
  width: 27px;
}
.sig {
  width: 5px;
  height: 4px;
  margin-right: 2px;
  border-bottom: 1px solid #3fd46a;
}
.sig.high {
  background: #3fd46a;
}
.sig.red {
  border-bottom-color: #e05050;
}
.mon {
  display: flex;
  gap: 2px;
  height: 8px;
}
.mon span {
  width: 12px;
  background: #262a2e;
  color: #9a9da0;
  font-size: 7px;
  line-height: 8px;
  text-align: center;
}
.mon span.on {
  width: 19px;
  background: #b4b6b8;
  color: #5a5d60;
  outline: 1px solid #dadcdd;
  outline-offset: -1px;
}
.mon span:last-child {
  width: 14px;
}
.wide .mon span {
  color: #d8dadc;
  background: #1b1f23;
}
.wide .mon span.armed {
  width: 19px;
  background: #ee9b49;
  color: #4a2a08;
  outline: 1px solid #ffcc90;
  outline-offset: -1px;
}
.sends {
  height: 39px;
  flex: none;
  display: flex;
  padding: 3px 0 0 18.5px;
  gap: 4px;
  border-bottom: 1px solid #23272b;
  background: #3a4046;
}
.wide .sends {
  padding-left: 31px;
}
.knob {
  width: 18px;
  display: flex;
  flex-direction: column;
  align-items: center;
  color: #d6d8da;
  font-size: 7px;
  line-height: 9px;
}
.knob b {
  margin-top: -5px;
  font-weight: bold;
  font-size: 7px;
}
.knob span {
  font-weight: bold;
  height: 8px;
  margin-top: 1px;
  line-height: 8px;
}
.knob svg {
  flex: none;
}
.knob span + svg {
  margin-top: 3px;
}
.mix {
  height: 83px;
  flex: none;
  display: flex;
  padding: 4px 0 0 11.5px;
  background: #3a4046;
}
.wide .mix {
  padding-left: 25px;
}
.head .mix {
  padding-left: 0;
  margin-left: -7px;
}
.mix-l {
  width: 24px;
  flex: none;
  display: flex;
  flex-direction: column;
  align-items: center;
}
.pill {
  width: 24px;
  height: 8px;
  margin-top: 1px;
  border-radius: 4px;
  background: #1b1f23;
  color: #d0d2d4;
  font-size: 7px;
  line-height: 8px;
  text-align: center;
}
.pan {
  margin-top: 7px;
  flex: none;
}
.num {
  width: 15px;
  height: 15px;
  margin-top: 1px;
  background: #f2a24e;
  border: 1px solid #d08838;
  color: #39240c;
  font-size: 8px;
  font-weight: bold;
  line-height: 13px;
  text-align: center;
}
.solo {
  width: 15px;
  height: 9px;
  margin-top: 3px;
  background: #1d2125;
  color: #c8cacc;
  font-size: 7px;
  line-height: 9px;
  text-align: center;
}
.arm {
  width: 15px;
  height: 8px;
  margin-top: 3px;
  background: #1d2125;
  display: flex;
  align-items: center;
  justify-content: center;
}
.arm i {
  width: 4px;
  height: 4px;
  border-radius: 50%;
  background: #c8cacc;
}
.arm.hot {
  background: #e4484f;
}
.arm.hot i {
  background: #3a0c10;
}
.flag {
  width: 7px;
  height: 5px;
  margin-left: 3px;
  background: #f0f1f2;
  clip-path: polygon(0 0, 100% 0, 0 100%);
  flex: none;
}
.flag.big {
  width: 8px;
  height: 9px;
  margin: 4px 1px 0 2px;
  clip-path: polygon(0 0, 100% 50%, 0 100%);
}
.ticks {
  width: 1px;
  height: 70px;
  margin: 2px 0 0 -7px;
  background: repeating-linear-gradient(180deg, #5e6368 0 1px, transparent 1px 11px);
  flex: none;
}
.meter {
  position: relative;
  width: 9px;
  height: 73px;
  margin-left: 7px;
  background: linear-gradient(90deg, #14181b 0 4px, #0b0d0f 4px 5px, #14181b 5px);
  display: flex;
  flex-direction: column;
  justify-content: flex-end;
  flex: none;
}
.flag.big + .meter {
  margin-left: 0;
}
.meter::before {
  content: "";
  position: absolute;
  left: 0;
  right: 0;
  top: 8px;
  height: 1px;
  background: #c9cccd;
}
.peak {
  position: absolute;
  left: 0;
  right: 0;
  height: 1px;
  background: #34b858;
}
.fill {
  background: linear-gradient(180deg, #2aa248 0 5px, #3fe162 6px);
  border-left: 1px solid #14181b;
  border-right: 1px solid #14181b;
}
.fill.loud {
  background: linear-gradient(180deg, #8a8a2a 0 9px, #3fe162 10px);
}
.scale {
  margin-left: 2px;
  color: #bfc2c4;
  font-size: 7px;
  display: flex;
  flex-direction: column;
  padding-top: 4px;
}
.scale span {
  height: 14px;
  line-height: 8px;
}
.scale span:nth-child(3) { height: 13px; }
.scale span:nth-child(4) { height: 10px; }
.scale span:nth-child(5) { height: 9px; }
.foot {
  margin-top: auto;
  height: 5px;
  flex: none;
  background: var(--foot);
}

/* selected track */
.selected .slot,
.selected .slot:nth-child(2) {
  background: #52565c;
  border-bottom-color: #3d4146;
}
.selected .empty {
  background: linear-gradient(180deg, #5f6169, #54565e);
}
.selected .dev {
  background: #4f525a;
}
.selected .sends {
  background: #5b5e66;
}
.selected .mix {
  background: #54565e;
}
.selected .dd.sub {
  background: #34373c;
}

/* bottom */
.drop {
  height: 134px;
  margin-left: 4px;
  width: 1104px;
  flex: none;
  background: #3a4047;
  display: flex;
  align-items: center;
  justify-content: center;
  color: #c6c9cb;
  font-size: 7.4px;
  padding-top: 2px;
}
.status {
  flex: 1;
  display: flex;
  align-items: center;
  padding-left: 7px;
  background: #2a2d32;
}
.info {
  width: 9px;
  height: 9px;
  border-radius: 50%;
  background: #6b7075;
  color: #2a2d32;
  font-size: 7px;
  font-weight: bold;
  line-height: 9px;
  text-align: center;
  flex: none;
}
.status-field {
  width: 849px;
  height: 12px;
  margin-left: 11px;
  background: #3a3f45;
  flex: none;
}
.status-play {
  width: 12px;
  height: 12px;
  margin-left: 4px;
  background: #3a3f45;
  padding: 3px 4px;
  flex: none;
}
.status-play i {
  width: 0;
  height: 0;
  border-left: 4px solid #dcdee0;
  border-top: 3px solid transparent;
  border-bottom: 3px solid transparent;
}
.status-field2 {
  width: 134px;
  height: 12px;
  margin-left: 1px;
  background: #3a3f45;
  flex: none;
}
.status-arm {
  width: 13px;
  height: 13px;
  margin-left: 7px;
  background: #f2a24e;
  padding: 4px 3px;
  flex: none;
}
.status-arm i {
  border-left: 3.5px solid transparent;
  border-right: 3.5px solid transparent;
  border-bottom: 4px solid #3a2408;
  width: 0;
}
.status-name {
  width: 31px;
  height: 13px;
  background: #33373c;
  color: #e0e2e3;
  font-size: 7px;
  font-weight: bold;
  line-height: 13px;
  text-align: center;
  flex: none;
}
.status-icon {
  margin-left: 10px;
  flex: none;
}
.status-caret {
  margin-left: 3px;
  border-top-color: #565b60;
}

/* plugin window, floating over the set */
.plugin {
  position: absolute;
  left: 762px;
  top: 63px;
  width: 355px;
  height: 605px;
  overflow: hidden;
  background: #000;
  border-radius: 5px 0 0 5px;
  box-shadow: 0 0 3px #000;
  font-family: "DejaVu Sans", sans-serif;
  color: #d8dadc;
}
.plugin-bar {
  height: 10px;
  background: #37383a;
  display: flex;
  align-items: center;
  gap: 3px;
  padding-left: 3px;
}
.plugin-bar span {
  margin-left: 260px;
  font-size: 5.5px;
  color: #a8aaac;
  white-space: nowrap;
}
.light {
  width: 5px;
  height: 5px;
  border-radius: 50%;
  background: #5a5b5d;
  flex: none;
}
.light.close {
  background: #e4555a;
}
.plugin-body {
  width: 800px;
  padding: 13px 0 0 8px;
}
.plugin-body h1 {
  margin: 0 0 0 269px;
  font-size: 9.5px;
  line-height: 12px;
  color: #f2f3f4;
}
.ready {
  margin: 8px 0 0 2px;
  color: #72d26e;
  font-size: 7.5px;
  line-height: 10px;
}
.note {
  margin: 1px 0 0 2px;
  font-size: 6.7px;
  line-height: 10px;
}
.group {
  width: 500px;
  margin-left: 1px;
  border: 1px solid #5a5d60;
  border-radius: 3px;
  padding: 6px 4px 0;
}
.group-input {
  margin-top: 23px;
  height: 96px;
}
.group-proc {
  margin-top: 11px;
  height: 89px;
}
.group-label {
  margin-left: 3px;
  font-size: 6.6px;
  line-height: 12px;
}
.field {
  height: 17px;
  padding-left: 3px;
  background: #2f353a;
  border: 1px solid #3c4348;
  border-radius: 2px;
  color: #8a8e92;
  font-size: 7.3px;
  line-height: 15px;
}
.hint {
  margin-left: 3px;
  font-size: 6.7px;
  line-height: 12px;
  white-space: nowrap;
}
.btn {
  height: 17px;
  background: #24282b;
  border: 1px solid #595d60;
  border-radius: 3px;
  color: #dfe1e3;
  font-size: 7.2px;
  line-height: 15px;
  text-align: center;
  flex: none;
}
.btn.dim {
  color: #777b7f;
  background: #15181a;
}
.btn-acq {
  width: 103px;
  margin-top: 2px;
}
.buffer-row {
  display: flex;
  align-items: center;
  margin: 2px 0 0 3px;
  font-size: 6.6px;
}
.buffer-row span {
  width: 176px;
  flex: none;
}
.select {
  width: 114px;
  height: 17px;
  display: flex;
  align-items: center;
  justify-content: space-between;
  padding: 0 7px 0 3px;
  background: #2b3135;
  border: 1px solid #4a5054;
  border-radius: 2px;
  color: #6f7478;
  font-size: 7.3px;
}
.btn-row {
  display: flex;
  gap: 3px;
  margin-top: 2px;
}
.btn-load { width: 52px; }
.btn-retry { width: 47px; }
.btn-clear { width: 47px; font-weight: bold; }
.btn-editor { width: 65px; }
.inventory {
  margin-top: 5px;
}
.tabs {
  display: flex;
  margin-top: 5px;
  height: 18px;
}
.tab {
  padding: 0 5px;
  background: #2c3136;
  font-size: 7px;
  line-height: 19px;
}
.tab.active {
  padding: 0 6px;
  background: #1c2024;
}
.tab-panel {
  width: 500px;
  height: 292px;
  background: #1c2024;
  display: flex;
  font-size: 7px;
}
.channels {
  width: 226px;
  flex: none;
  padding: 8px 0 0 7px;
  border-right: 4px solid #191c20;
  display: flex;
  flex-direction: column;
}
.channels h2 {
  margin: 0 0 0 3px;
  font-size: 7.6px;
  line-height: 12px;
  color: #e6e8ea;
  white-space: nowrap;
}
.patchbay h2 {
  margin: 0;
  font-size: 7.5px;
  line-height: 12px;
  color: #e6e8ea;
}
.lc-head,
.lc-row {
  display: grid;
  grid-template-columns: 18px 55px 29px 33px 42px 33px;
  flex: none;
}
.lc-head {
  height: 15px;
  margin-top: 16px;
  background: #b0b2b4;
  color: #222;
  font-size: 6.5px;
  font-weight: bold;
  line-height: 15px;
}
.lc-head span {
  padding-left: 3px;
  border-right: 1px solid #8c8e90;
  overflow: hidden;
  white-space: nowrap;
}
.lc-head span:nth-child(2) { padding-left: 4px; }
.lc-row {
  height: 17.4px;
  line-height: 18.4px;
  color: #d4d6d8;
}
.lc-row span {
  padding-left: 3px;
  white-space: nowrap;
  overflow: hidden;
}
.lc-row span:first-child {
  padding-left: 7px;
}
.lc-row span:nth-child(2) {
  padding-left: 5px;
}
.lc-row .on-cell {
  display: flex;
  align-items: center;
  padding-left: 2px;
  font-size: 5.5px;
  color: #9a9ea2;
  gap: 3px;
}
.check {
  width: 9px;
  height: 9px;
  border: 1px solid #6d7175;
  border-radius: 2px;
  flex: none;
  position: relative;
}
.check::after {
  content: "";
  position: absolute;
  left: 2px;
  top: 1px;
  width: 4px;
  height: 2px;
  border-left: 1px solid #eee;
  border-bottom: 1px solid #eee;
  transform: rotate(-45deg);
}
.lc-row .act {
  position: relative;
  margin-left: 3px;
  background: #0f1215;
  height: 13px;
  align-self: center;
  line-height: 13px;
  padding-left: 0;
}
.act i {
  position: absolute;
  left: 0;
  top: 1.5px;
  bottom: 1.5px;
  background: #5cc9a7;
  border-radius: 1px;
}
.act em {
  position: relative;
  display: block;
  padding-left: 6px;
  font-style: normal;
}
.lc-space {
  flex: 1;
}
.scrollbar {
  width: 157px;
  height: 3px;
  border-radius: 2px;
  background: #3ea0b8;
}
.lc-actions {
  display: flex;
  gap: 2px;
  margin: 1px 0 7px;
}
.btn.small {
  height: 17px;
  font-size: 6.5px;
  border-radius: 4px;
}
.btn.add { width: 26px; font-weight: bold; font-size: 7.5px; }
.b-rename { width: 34px; }
.b-role { width: 31px; }
.b-earlier { width: 35px; }
.b-later { width: 29px; }
.b-remove { width: 34px; }
.patchbay {
  flex: 1;
  padding: 7px 0 0 10px;
}
.patchbay p {
  margin: 0;
  font-size: 7px;
  line-height: 11px;
}
.canvas {
  width: 118px;
  height: 177px;
  margin: 12px 0 0 -3px;
  padding: 3px 0 0 5px;
  background: #12161a;
}
.canvas-title {
  width: 104px;
  margin-bottom: 5px;
  text-align: center;
  color: #9a9ea2;
  font-size: 5.5px;
  line-height: 10px;
}
.node {
  position: relative;
  width: 104px;
  height: 15.5px;
  margin-bottom: 4px;
  padding-left: 4px;
  background: #173a32;
  border: 1px solid #2f7a66;
  border-radius: 3px;
  color: #cfd6d4;
  font-size: 5.5px;
  line-height: 13.5px;
  white-space: nowrap;
}
.node i {
  position: absolute;
  right: -1px;
  top: 5px;
  width: 3px;
  height: 3px;
  border-radius: 50%;
  background: #5cc9a7;
}
.selectbar {
  width: 300px;
  height: 19px;
  margin: 47px 0 0 -3px;
  padding-left: 7px;
  background: #14181b;
  border: 1px solid #23282c;
  border-radius: 3px;
  color: #9cc6da;
  font-size: 7px;
  line-height: 17px;
  white-space: nowrap;
}
.cursor {
  position: absolute;
  left: 448px;
  top: 81px;
}
```
